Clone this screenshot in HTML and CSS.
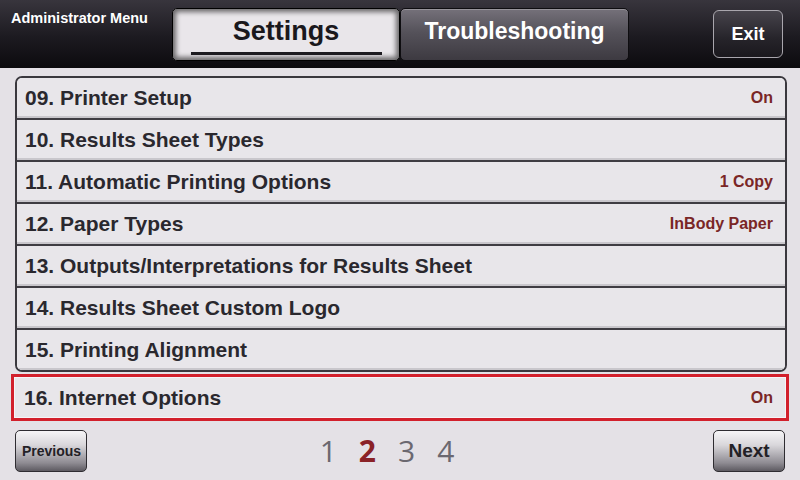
FILE: index.html
```html
<!DOCTYPE html>
<html lang="en">
<head>
  <meta charset="UTF-8">
  <title>Administrator Menu</title>
  <link rel="stylesheet" href="styles.css">
</head>
<body>

  <div class="header">
    <div class="title">Administrator Menu</div>
    <div class="tabs">
      <div class="tab active"><span class="tabLabel">Settings</span></div>
      <div class="tab">Troubleshooting</div>
    </div>
    <button class="exitBtn">Exit</button>
  </div>

  <div class="content">
    <div class="menuList">
      <div class="menuRow"><span class="rowName">09. Printer Setup</span><span class="rowValue">On</span></div>
      <div class="menuRow"><span class="rowName">10. Results Sheet Types</span></div>
      <div class="menuRow"><span class="rowName">11. Automatic Printing Options</span><span class="rowValue">1 Copy</span></div>
      <div class="menuRow"><span class="rowName">12. Paper Types</span><span class="rowValue">InBody Paper</span></div>
      <div class="menuRow"><span class="rowName">13. Outputs/Interpretations for Results Sheet</span></div>
      <div class="menuRow"><span class="rowName">14. Results Sheet Custom Logo</span></div>
      <div class="menuRow"><span class="rowName">15. Printing Alignment</span></div>
    </div>

    <div class="menuRow selected"><span class="rowName">16. Internet Options</span><span class="rowValue">On</span></div>

    <div class="footer">
      <button class="pageBtn prevBtn">Previous</button>
      <div class="pager">
        <span class="pageNum">1</span>
        <span class="pageNum current">2</span>
        <span class="pageNum">3</span>
        <span class="pageNum">4</span>
      </div>
      <button class="pageBtn nextBtn">Next</button>
    </div>
  </div>

</body>
</html>
```

FILE: styles.css
```css
body {
  margin: 0;
  width: 800px;
  height: 480px;
  overflow: hidden;
  font-family: "Liberation Sans", Arial, sans-serif;
  background-color: #e4e1e6;
}

.header {
  display: flex;
  align-items: flex-start;
  height: 68px;
  background: linear-gradient(#38353d, #1c1a20 55%, #0c0b0e);
}

.title {
  width: 161px;
  padding: 10px 0 0 11px;
  color: #fff;
  font-size: 14.5px;
  font-weight: bold;
}

.tabs {
  display: flex;
  margin-top: 8px;
}

.tab {
  display: flex;
  align-items: center;
  justify-content: center;
  width: 229px;
  height: 53px;
  box-sizing: border-box;
  padding-bottom: 6px;
  border: 1px solid #0e0d10;
  border-radius: 5px;
  color: #fff;
  font-size: 23px;
  font-weight: bold;
  background: linear-gradient(#75717a, #55525a 45%, #3d3a41);
  box-shadow: inset 0 1px 0 rgba(255, 255, 255, 0.25);
}

.tab.active {
  width: 228px;
  padding-bottom: 0;
  flex-direction: column;
  justify-content: flex-start;
  color: #1a181c;
  font-size: 27px;
  background: #e9e6ea;
  border-color: #000;
  box-shadow: inset 0 0 5px 3px rgba(0, 0, 0, 0.55);
}

.tabLabel {
  display: block;
  width: 191px;
  margin-top: 7px;
  padding-bottom: 5px;
  text-align: center;
  border-bottom: 3px solid #1d1b20;
}

.exitBtn {
  margin: 10px 17px 0 auto;
  width: 70px;
  height: 48px;
  border: 1px solid #a9a6ad;
  border-radius: 6px;
  background: linear-gradient(#46434b, #26242a 60%, #1a181d);
  color: #fff;
  font-family: inherit;
  font-size: 18px;
  font-weight: bold;
}

.content {
  padding: 8px 13px 0 15px;
}

.menuList {
  border: 2px solid #3a383e;
  border-radius: 7px;
  overflow: hidden;
  background-color: #e8e6ea;
}

.menuRow {
  display: flex;
  align-items: center;
  justify-content: space-between;
  height: 40px;
  padding: 0 12px 0 8px;
  background-color: #e8e6ea;
  border-bottom: 2px solid #3f3d43;
  box-shadow: inset 0 -2px 0 #c9c7cc;
}

.menuRow:last-child {
  border-bottom: none;
}

.rowName {
  color: #2a282e;
  font-size: 21px;
  font-weight: bold;
}

.rowValue {
  color: #7a2626;
  font-size: 16px;
  font-weight: bold;
}

.menuRow.selected {
  height: 47px;
  box-sizing: border-box;
  margin: 2px -2px 0 -4px;
  padding: 0 13px 0 10px;
  border: 3px solid #d2202c;
  box-shadow: inset 0 0 0 1px #f6f4f7;
}

.footer {
  display: flex;
  align-items: center;
  margin-top: 9px;
}

.pageBtn {
  height: 42px;
  border: 1px solid #2e2c31;
  border-radius: 5px;
  background: linear-gradient(#f6f5f7, #d9d7db 35%, #8e8b92 80%, #5d5a61);
  color: #232126;
  font-family: inherit;
  font-weight: bold;
}

.prevBtn {
  width: 72px;
  font-size: 14px;
}

.nextBtn {
  width: 72px;
  margin-right: 2px;
  font-size: 19px;
}

.pager {
  flex: 1;
  display: flex;
  justify-content: center;
  gap: 22px;
  padding-right: 26px;
}

.pageNum {
  color: #6b6870;
  font-family: "Open Sans", sans-serif;
  font-size: 30px;
  line-height: 1;
}

.pageNum.current {
  color: #8a2227;
  font-weight: bold;
}
```
